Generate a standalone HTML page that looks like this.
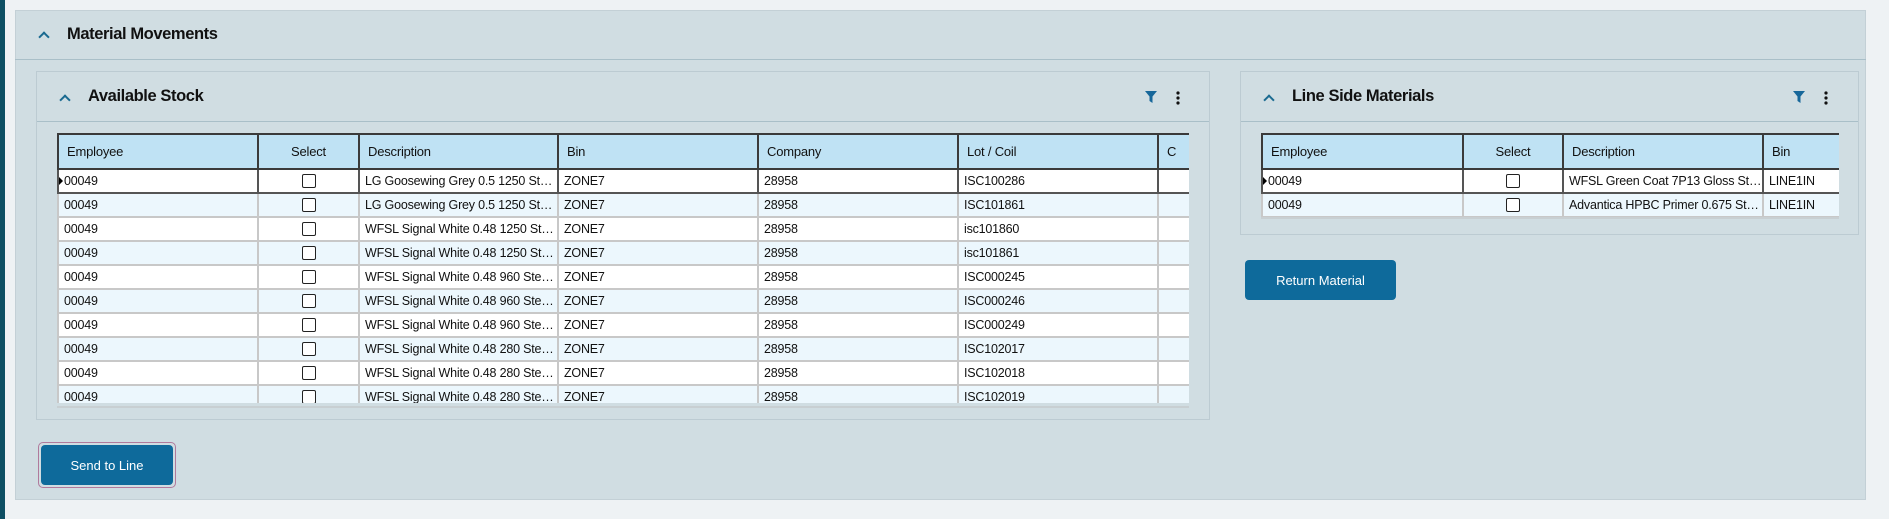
<!DOCTYPE html>
<html><head><meta charset="utf-8"><style>
*{box-sizing:border-box;margin:0;padding:0}
body{width:1889px;height:519px;background:#eef2f4;position:relative;overflow:hidden;font-family:"Liberation Sans",sans-serif;color:#111}
.a{position:absolute}
.bar{left:0;top:0;width:5px;height:519px;background:#0d4f63}
.outer{left:15px;top:10px;width:1851px;height:490px;background:#d0dde2;border:1px solid #c3d0d6}
.panel{background:#d0dde2;border:1px solid #bccbd2}
.title{font-weight:bold;font-size:16.5px;letter-spacing:-0.4px}
.chev{width:8px;height:8px;border-left:2px solid #1a6a90;border-top:2px solid #1a6a90;transform:rotate(45deg)}
.hline{height:1px;background:#a9bfc8}
table{border-collapse:collapse;table-layout:fixed;font-size:12.5px;letter-spacing:-0.2px}
th{background:#bfe2f4;height:35px;text-align:left;padding-left:8px;font-weight:normal;border:2px solid #3a3a3a;font-size:13px}
td{height:24px;padding-left:5px;border:2px solid #c8c8c8;border-top:none;white-space:nowrap;overflow:hidden;text-overflow:ellipsis}
tr:nth-child(even) td{background:#fff}
tr:nth-child(odd) td{background:#ecf7fd}
tr.f td{border-bottom:2px solid #555;border-left-color:#555;border-right-color:#555}
td.c{text-align:center;padding:0}
.cb{display:inline-block;width:14px;height:14px;border:1.5px solid #222;border-radius:2px;background:#fff;vertical-align:middle}
.btn{background:#0e6a9b;color:#fff;font-size:13px;border-radius:4px;display:flex;align-items:center;justify-content:center}
.wrap{overflow:hidden}
.arrow{position:absolute;left:0;top:7px;width:0;height:0;border-top:4px solid transparent;border-bottom:4px solid transparent;border-left:4px solid #000}
</style></head><body>
<div class="a bar"></div>
<div class="a outer"></div>
<div class="a chev" style="left:40px;top:33px"></div>
<div class="a title" style="left:67px;top:25px">Material Movements</div>
<div class="a hline" style="left:15px;top:59px;width:1851px"></div>

<div class="a panel" style="left:36px;top:71px;width:1174px;height:349px"></div>
<div class="a chev" style="left:61px;top:96px"></div>
<div class="a title" style="left:88px;top:87px">Available Stock</div>
<div class="a hline" style="left:37px;top:121px;width:1172px"></div>
<svg class="a" style="left:1144px;top:90px" width="14" height="14" viewBox="0 0 14 14"><path d="M1 1H13L8.5 6.5V13L5.5 11V6.5Z" fill="#17679a"/></svg>
<svg class="a" style="left:1175px;top:91px" width="6" height="14"><circle cx="3" cy="2" r="1.6" fill="#111"/><circle cx="3" cy="7" r="1.6" fill="#111"/><circle cx="3" cy="12" r="1.6" fill="#111"/></svg>
<div class="a wrap" style="left:57px;top:133px;width:1132px;height:270px">
<table style="width:1200px">
<colgroup><col style="width:200px"><col style="width:101px"><col style="width:199px"><col style="width:200px"><col style="width:200px"><col style="width:200px"><col style="width:100px"></colgroup>
<tr><th>Employee</th><th style="text-align:center;padding:0">Select</th><th>Description</th><th>Bin</th><th>Company</th><th>Lot / Coil</th><th>C</th></tr>
<tr class="f"><td style="position:relative"><span class="arrow"></span>00049</td><td class="c"><span class="cb"></span></td><td>LG Goosewing Grey 0.5 1250 Steel Coil Standard</td><td>ZONE7</td><td>28958</td><td>ISC100286</td><td></td></tr>
<tr><td>00049</td><td class="c"><span class="cb"></span></td><td>LG Goosewing Grey 0.5 1250 Steel Coil Standard</td><td>ZONE7</td><td>28958</td><td>ISC101861</td><td></td></tr>
<tr><td>00049</td><td class="c"><span class="cb"></span></td><td>WFSL Signal White 0.48 1250 Steel Coil</td><td>ZONE7</td><td>28958</td><td>isc101860</td><td></td></tr>
<tr><td>00049</td><td class="c"><span class="cb"></span></td><td>WFSL Signal White 0.48 1250 Steel Coil</td><td>ZONE7</td><td>28958</td><td>isc101861</td><td></td></tr>
<tr><td>00049</td><td class="c"><span class="cb"></span></td><td>WFSL Signal White 0.48 960 Steel Coil Standard</td><td>ZONE7</td><td>28958</td><td>ISC000245</td><td></td></tr>
<tr><td>00049</td><td class="c"><span class="cb"></span></td><td>WFSL Signal White 0.48 960 Steel Coil Standard</td><td>ZONE7</td><td>28958</td><td>ISC000246</td><td></td></tr>
<tr><td>00049</td><td class="c"><span class="cb"></span></td><td>WFSL Signal White 0.48 960 Steel Coil Standard</td><td>ZONE7</td><td>28958</td><td>ISC000249</td><td></td></tr>
<tr><td>00049</td><td class="c"><span class="cb"></span></td><td>WFSL Signal White 0.48 280 Steel Coil Standard</td><td>ZONE7</td><td>28958</td><td>ISC102017</td><td></td></tr>
<tr><td>00049</td><td class="c"><span class="cb"></span></td><td>WFSL Signal White 0.48 280 Steel Coil Standard</td><td>ZONE7</td><td>28958</td><td>ISC102018</td><td></td></tr>
<tr><td>00049</td><td class="c"><span class="cb"></span></td><td>WFSL Signal White 0.48 280 Steel Coil Standard</td><td>ZONE7</td><td>28958</td><td>ISC102019</td><td></td></tr>
</table></div>
<div class="a" style="left:57px;top:406px;width:1132px;height:2px;background:#c8cfd2"></div>

<div class="a panel" style="left:1240px;top:71px;width:619px;height:164px"></div>
<div class="a chev" style="left:1265px;top:96px"></div>
<div class="a title" style="left:1292px;top:87px">Line Side Materials</div>
<div class="a hline" style="left:1241px;top:121px;width:617px"></div>
<svg class="a" style="left:1792px;top:90px" width="14" height="14" viewBox="0 0 14 14"><path d="M1 1H13L8.5 6.5V13L5.5 11V6.5Z" fill="#17679a"/></svg>
<svg class="a" style="left:1823px;top:91px" width="6" height="14"><circle cx="3" cy="2" r="1.6" fill="#111"/><circle cx="3" cy="7" r="1.6" fill="#111"/><circle cx="3" cy="12" r="1.6" fill="#111"/></svg>
<div class="a wrap" style="left:1261px;top:133px;width:578px;height:84px">
<table style="width:640px">
<colgroup><col style="width:201px"><col style="width:100px"><col style="width:200px"><col style="width:139px"></colgroup>
<tr><th>Employee</th><th style="text-align:center;padding:0">Select</th><th>Description</th><th>Bin</th></tr>
<tr class="f"><td style="position:relative"><span class="arrow"></span>00049</td><td class="c"><span class="cb"></span></td><td>WFSL Green Coat 7P13 Gloss Steel Coil</td><td>LINE1IN</td></tr>
<tr><td>00049</td><td class="c"><span class="cb"></span></td><td>Advantica HPBC Primer 0.675 Steel Coil</td><td>LINE1IN</td></tr>
</table></div>
<div class="a" style="left:1261px;top:217px;width:578px;height:2px;background:#c8cfd2"></div>

<div class="a btn" style="left:1245px;top:260px;width:151px;height:40px">Return Material</div>
<div class="a" style="left:38px;top:442px;width:138px;height:46px;border:1px solid #b07a9c;border-radius:5px"></div>
<div class="a btn" style="left:41px;top:445px;width:132px;height:40px">Send to Line</div>
</body></html>
